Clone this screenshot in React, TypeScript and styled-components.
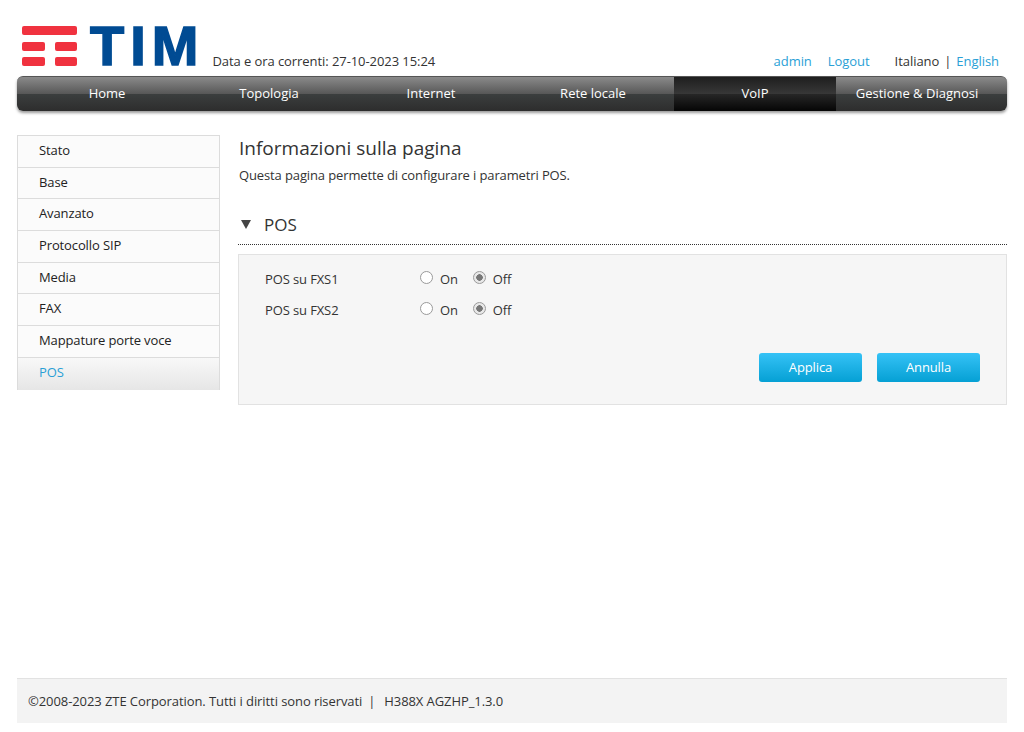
import React from 'react'
import { createGlobalStyle, styled } from 'styled-components'

const menuItems = ['Home', 'Topologia', 'Internet', 'Rete locale', 'VoIP', 'Gestione & Diagnosi']
const sideItems = ['Stato', 'Base', 'Avanzato', 'Protocollo SIP', 'Media', 'FAX', 'Mappature porte voce', 'POS']
const posRows = ['POS su FXS1', 'POS su FXS2']

export default function App() {
	return (
		<>
			<GlobalStyle />
			<Page>
				<Header>
					<Logo>
						<svg width="55" height="40" viewBox="0 0 55 40" fill="#f0323f">
							<rect x="0" y="0" width="55" height="9" rx="2" />
							<rect x="0" y="16" width="23" height="9" rx="2" />
							<rect x="33" y="16" width="22" height="9" rx="2" />
							<rect x="0" y="31" width="23" height="9" rx="2" />
							<rect x="33" y="31" width="22" height="9" rx="2" />
						</svg>
						<LogoText>TIM</LogoText>
					</Logo>
					<DateText>Data e ora correnti: 27-10-2023 15:24</DateText>
					<UserLinks>
						<TopLink>admin</TopLink>
						<TopLink>Logout</TopLink>
						<Languages>
							Italiano<Pipe>|</Pipe>
							<TopLink>English</TopLink>
						</Languages>
					</UserLinks>
				</Header>
				<Menu>
					{menuItems.map((item) => (
						<MenuItem key={item} $active={item === 'VoIP'}>
							{item}
						</MenuItem>
					))}
				</Menu>
				<Content>
					<SideMenu>
						{sideItems.map((item) => (
							<SideItem key={item} $active={item === 'POS'}>
								{item}
							</SideItem>
						))}
					</SideMenu>
					<Main>
						<Title>Informazioni sulla pagina</Title>
						<Description>Questa pagina permette di configurare i parametri POS.</Description>
						<SectionHead>
							<Arrow />
							POS
						</SectionHead>
						<Panel>
							{posRows.map((row) => (
								<Row key={row}>
									<RowLabel>{row}</RowLabel>
									<Radio />
									<RadioText>On</RadioText>
									<Radio $checked />
									<RadioText>Off</RadioText>
								</Row>
							))}
							<Buttons>
								<Button>Applica</Button>
								<Button>Annulla</Button>
							</Buttons>
						</Panel>
					</Main>
				</Content>
				<Footer>
					©2008-2023 ZTE Corporation. Tutti i diritti sono riservati<FooterPipe>|</FooterPipe>H388X AGZHP_1.3.0
				</Footer>
			</Page>
		</>
	)
}

const GlobalStyle = createGlobalStyle`
	html, body {
		margin: 0;
		padding: 0;
		background: #fff;
	}
	body {
		font-family: 'Open Sans', 'Noto Sans', sans-serif;
		font-size: 13px;
		letter-spacing: -0.12px;
		color: #333;
	}
`

const Page = styled.div`
	box-sizing: border-box;
	min-height: 732px;
	padding: 25px 17px 9px;
	display: flex;
	flex-direction: column;
`

const Header = styled.div`
	display: flex;
	align-items: flex-end;
	height: 51px;
	padding-left: 5px;
`

const Logo = styled.div`
	display: flex;
	align-items: flex-start;
	column-gap: 13px;
	height: 50px;
	padding-top: 1px;
`

const LogoText = styled.span`
	font-family: 'Liberation Sans', sans-serif;
	font-weight: 700;
	font-size: 56px;
	line-height: 40px;
	letter-spacing: 6px;
	color: #004b93;
	-webkit-text-stroke: 1.5px #004b93;
`

const DateText = styled.div`
	margin-left: 8px;
	line-height: 20px;
	padding-bottom: 5px;
	letter-spacing: -0.07px;
`

const UserLinks = styled.div`
	margin-left: auto;
	display: flex;
	column-gap: 17px;
	line-height: 20px;
	padding: 0 8px 5px 0;
	letter-spacing: -0.05px;
	& > span:first-child {
		margin-right: -1px;
	}
`

const TopLink = styled.span`
	color: #2a9fd6;
`

const Languages = styled.div`
	margin-left: 8px;
`

const Pipe = styled.span`
	margin: 0 5px;
`

const Menu = styled.div`
	box-sizing: border-box;
	height: 35px;
	padding: 0 9px;
	display: grid;
	grid-template-columns: repeat(6, 162px);
	border-radius: 6px;
	border-top: 1px solid #555;
	background: linear-gradient(#8a8a8a 0%, #565656 51%, #3b3e3e 51%, #2d2d2d 100%);
	box-shadow: 0 2px 3px #00000066;
	letter-spacing: 0;
`

const MenuItem = styled.div<{ $active?: boolean }>`
	display: flex;
	align-items: center;
	justify-content: center;
	padding-bottom: 2px;
	color: #fff;
	background: ${(p) => (p.$active ? 'linear-gradient(#1e1e1e 0%, #383838 51%, #262626 51%, #050505 100%)' : 'none')};
`

const Content = styled.div`
	display: flex;
	column-gap: 18px;
	margin-top: 24px;
`

const SideMenu = styled.div`
	box-sizing: border-box;
	width: 203px;
	height: 255px;
	border: 1px solid #dcdcdc;
	align-self: flex-start;
`

const SideItem = styled.div<{ $active?: boolean }>`
	box-sizing: border-box;
	height: 31.7px;
	line-height: 29px;
	padding-left: 21px;
	border-bottom: 1px solid #dcdcdc;
	color: ${(p) => (p.$active ? '#2a9fd6' : '#222')};
	background: ${(p) => (p.$active ? 'linear-gradient(#f8f8f8, #e6e6e6)' : '#fbfbfb')};
	&:last-child {
		border-bottom: 0;
	}
`

const Main = styled.div`
	flex: 1;
	min-width: 0;
`

const Title = styled.div`
	font-size: 19px;
	line-height: 26px;
	padding-left: 1px;
	letter-spacing: 0;
`

const Description = styled.div`
	line-height: 18px;
	margin-top: 5px;
	padding-left: 1px;
`

const SectionHead = styled.div`
	display: flex;
	align-items: center;
	column-gap: 13px;
	height: 35px;
	margin-top: 23px;
	padding: 0 0 2px 3px;
	font-size: 17px;
	letter-spacing: 0;
	border-bottom: 1px dotted #333;
`

const Arrow = styled.span`
	width: 0;
	height: 0;
	border-left: 5px solid transparent;
	border-right: 5px solid transparent;
	border-top: 9px solid #444;
`

const Panel = styled.div`
	box-sizing: border-box;
	height: 151px;
	margin-top: 9px;
	padding: 8px 26px 0;
	background: #f6f6f6;
	border: 1px solid #e2e2e2;
`

const Row = styled.div`
	display: flex;
	align-items: center;
	height: 31.5px;
`

const RowLabel = styled.div`
	width: 155px;
`

const Radio = styled.span<{ $checked?: boolean }>`
	box-sizing: border-box;
	width: 13px;
	height: 13px;
	margin-bottom: 3px;
	border-radius: 50%;
	border: 1px solid #9a9a9a;
	background: ${(p) => (p.$checked ? 'radial-gradient(circle, #777 0 3px, #e8e8e8 3.5px)' : '#fff')};
`

const RadioText = styled.span`
	margin: 0 15px 0 7px;
`

const Buttons = styled.div`
	display: flex;
	justify-content: flex-end;
	column-gap: 15px;
	margin-top: 27px;
`

const Button = styled.div`
	box-sizing: border-box;
	width: 103px;
	height: 29px;
	padding-bottom: 2px;
	display: flex;
	align-items: center;
	justify-content: center;
	color: #fff;
	border-radius: 3px;
	background: linear-gradient(#35c2f6, #05a0d4);
`

const Footer = styled.div`
	box-sizing: border-box;
	height: 45px;
	margin-top: auto;
	padding-left: 11px;
	display: flex;
	align-items: center;
	white-space: pre;
	letter-spacing: -0.08px;
	background: #f3f3f3;
	border-top: 1px solid #e2e2e2;
`

const FooterPipe = styled.span`
	margin: 0 9px 0 6px;
`
